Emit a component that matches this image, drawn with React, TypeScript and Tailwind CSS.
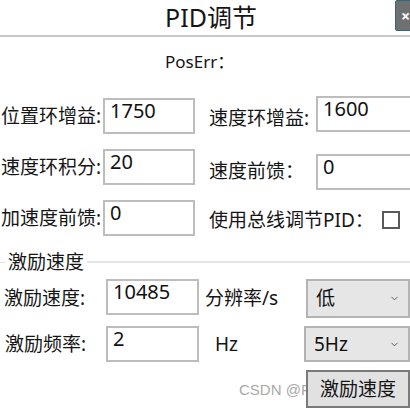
import { ChevronDown } from 'lucide-react';

const font = "font-['Noto_Sans','Noto_Sans_CJK_SC',sans-serif]";

function TextBox({ value, className }: { value: string; className?: string }) {
  return (
    <div className={`h-[36px] border-2 border-[#bdbdbd] bg-white pl-[5px] text-[20px] leading-[22px] text-[#111] ${className ?? ''}`}>
      {value}
    </div>
  );
}

function Select({ value, className }: { value: string; className?: string }) {
  return (
    <div className={`flex items-center justify-between border-2 border-[#b4b4b4] bg-[#e6e6e6] pl-[8px] pr-[8px] text-[19px] text-[#111] ${className ?? ''}`}>
      <span>{value}</span>
      <ChevronDown className="h-[11px] w-[11px] text-[#555]" strokeWidth={2} />
    </div>
  );
}

export default function App() {
  return (
    <div className={`relative h-[409px] w-[410px] overflow-hidden bg-white text-[#151515] ${font}`}>
      {/* title bar */}
      <div className="relative flex h-[37px] items-center justify-center border-b-2 border-[#c8c8c8] pl-[12px]">
        <span className="text-[25px] leading-none">PID调节</span>
        <div className="absolute right-[-6px] top-0 flex h-[31px] w-[21px] items-center justify-center rounded-[2px] border border-[#2f6a79] bg-[#6f7072] text-[16px] font-bold text-white">
          ×
        </div>
      </div>

      <div className="pl-[165px] pt-[13px] text-[17px] leading-[24px]">PosErr：</div>

      {/* PID params */}
      <div className="mt-[21px] flex">
        <div className="flex w-[209px] shrink-0 flex-col gap-[15px] pt-[3px]">
          <div className="flex items-center">
            <div className="w-[101px] shrink-0 overflow-hidden whitespace-nowrap text-right text-[19px]" dir="rtl">
              <span dir="ltr">位置环增益:</span>
            </div>
            <TextBox value="1750" className="ml-[2px] w-[92px]" />
          </div>
          <div className="flex items-center">
            <div className="w-[101px] shrink-0 overflow-hidden whitespace-nowrap text-right text-[19px]" dir="rtl">
              <span dir="ltr">速度环积分:</span>
            </div>
            <TextBox value="20" className="ml-[2px] w-[92px]" />
          </div>
          <div className="flex items-center">
            <div className="w-[101px] shrink-0 overflow-hidden whitespace-nowrap text-right text-[19px]" dir="rtl">
              <span dir="ltr">加速度前馈:</span>
            </div>
            <TextBox value="0" className="ml-[2px] w-[92px]" />
          </div>
        </div>
        <div className="flex min-w-0 flex-1 flex-col">
          <div className="flex items-center">
            <span className="mt-[9px] w-[107px] shrink-0 whitespace-nowrap text-[19px]">速度环增益:</span>
            <TextBox value="1600" className="w-[100px] shrink-0" />
          </div>
          <div className="mt-[21px] flex items-center">
            <span className="w-[107px] shrink-0 whitespace-nowrap text-[19px]">速度前馈：</span>
            <TextBox value="0" className="w-[100px] shrink-0" />
          </div>
          <div className="mt-[16px] flex items-center">
            <span className="w-[173px] shrink-0 whitespace-nowrap text-[19px]">使用总线调节PID：</span>
            <div className="h-[18px] w-[18px] border-2 border-[#5a5a5a] bg-white" />
          </div>
        </div>
      </div>

      {/* group box */}
      <div className="mt-[14px] flex items-center">
        <div className="h-px w-[5px] bg-[#dcdcdc]" />
        <span className="px-[3px] text-[19px] leading-[24px]">激励速度</span>
        <div className="h-[2px] flex-1 bg-[#e2e4e7]" />
      </div>

      <div className="mt-[5px] flex flex-col">
        <div className="flex items-center">
          <span className="w-[106px] shrink-0 pl-[4px] text-[19px]">激励速度:</span>
          <TextBox value="10485" className="mt-[-3px] w-[93px] shrink-0" />
          <span className="ml-[6px] w-[101px] shrink-0 text-[19px]">分辨率/s</span>
          <Select value="低" className="h-[39px] flex-1" />
        </div>
        <div className="mt-[8px] flex items-center">
          <span className="w-[106px] shrink-0 pl-[5px] text-[19px]">激励频率:</span>
          <TextBox value="2" className="w-[93px] shrink-0" />
          <span className="ml-[16px] w-[89px] shrink-0 text-[19px]">Hz</span>
          <Select value="5Hz" className="h-[36px] flex-1" />
        </div>
        <div className="relative mt-[8px] flex justify-end">
          <span className="absolute left-[239px] top-[9px] font-['Liberation_Sans',sans-serif] text-[15px] text-[#a9a9a9]">
            CSDN @FL
          </span>
          <div className="relative flex h-[38px] w-[104px] items-center justify-center border-2 border-[#7a7a7a] bg-[#e1e1e1] text-[19px]">
            激励速度
          </div>
        </div>
      </div>
    </div>
  );
}
